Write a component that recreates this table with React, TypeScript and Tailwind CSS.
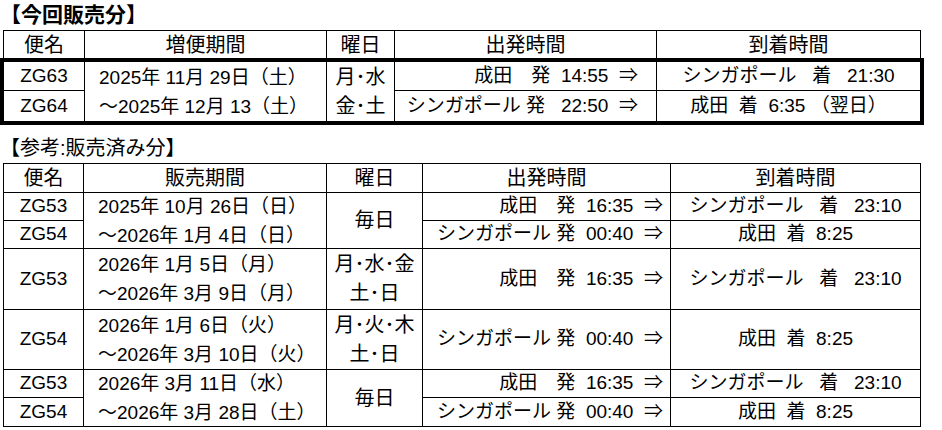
import React from "react";

type CellProps = {
  children?: React.ReactNode;
  className?: string;
};

const Cell = ({ children, className = "" }: CellProps) => (
  <div className={`bg-white flex items-center whitespace-pre ${className}`}>{children}</div>
);

const Center = ({ children, className = "" }: CellProps) => (
  <Cell className={`justify-center ${className}`}>{children}</Cell>
);

const Dates = ({ a, b, className = "" }: { a: string; b: string; className?: string }) => (
  <Cell className={`flex-col !items-start justify-center pl-[14px] leading-[29px] ${className}`}>
    <span>{a}</span>
    <span>{b}</span>
  </Cell>
);

const Days = ({ a, b, className = "" }: { a: string; b?: string; className?: string }) => (
  <Cell className={`flex-col justify-center leading-[29px] text-[20px] ${className}`}>
    <span>{a}</span>
    {b && <span>{b}</span>}
  </Cell>
);

const App = () => {
  return (
    <div className="w-[942px] h-[430px] bg-white text-black text-[19px] font-[family-name:'Liberation_Sans','Noto_Sans_CJK_JP',sans-serif]">
      <div className="h-[30px] text-[21px] font-bold leading-[30px]">【今回販売分】</div>

      <div className="ml-[3px] w-[918px] grid grid-cols-[80px_241px_67px_261px_263px] grid-rows-[27px] gap-px bg-black border-t border-x border-black text-[20px]">
        <Center>便名</Center>
        <Center>増便期間</Center>
        <Center>曜日</Center>
        <Center>出発時間</Center>
        <Center>到着時間</Center>
      </div>
      <div className="w-[924px] grid grid-cols-[80px_241px_67px_261px_263px] grid-rows-[28px_30px] gap-px bg-black border-4 border-black">
        <Center>ZG63</Center>
        <Dates className="row-span-2" a="2025年 11月 29日（土）" b="～2025年 12月 13（土）" />
        <Days className="row-span-2" a="月･水" b="金･土" />
        <Cell className="justify-end pr-[18px]">{"成田　発  14:55  ⇒"}</Cell>
        <Center>{"シンガポール   着   21:30"}</Center>
        <Center>ZG64</Center>
        <Cell className="justify-end pr-[18px]">{"シンガポール 発   22:50  ⇒"}</Cell>
        <Center>{"成田  着  6:35 （翌日）"}</Center>
      </div>

      <div className="h-[38px] pt-[11px] text-[20px] leading-[24px]">【参考:販売済み分】</div>

      <div className="ml-[3px] w-[918px] grid grid-cols-[79px_242px_95px_247px_249px] grid-rows-[28px_27px_27px_60px_59px_27px_28px] gap-px bg-black border border-black">
        <Center className="text-[20px]">便名</Center>
        <Center className="text-[20px]">販売期間</Center>
        <Center className="text-[20px]">曜日</Center>
        <Center className="text-[20px]">出発時間</Center>
        <Center className="text-[20px]">到着時間</Center>

        <Center>ZG53</Center>
        <Dates className="row-span-2" a="2025年 10月 26日（日）" b="～2026年 1月 4日（日）" />
        <Days className="row-span-2" a="毎日" />
        <Cell className="justify-end pr-[7px]">{"成田　発  16:35  ⇒"}</Cell>
        <Center>{"シンガポール   着   23:10"}</Center>
        <Center>ZG54</Center>
        <Cell className="justify-end pr-[7px]">{"シンガポール 発  00:40  ⇒"}</Cell>
        <Center>{"成田  着  8:25"}</Center>

        <Center>ZG53</Center>
        <Dates a="2026年 1月 5日（月）" b="～2026年 3月 9日（月）" />
        <Days a="月･水･金" b="土･日" />
        <Cell className="justify-end pr-[7px]">{"成田　発  16:35  ⇒"}</Cell>
        <Center>{"シンガポール   着   23:10"}</Center>

        <Center>ZG54</Center>
        <Dates a="2026年 1月 6日（火）" b="～2026年 3月 10日（火）" />
        <Days a="月･火･木" b="土･日" />
        <Cell className="justify-end pr-[7px]">{"シンガポール 発  00:40  ⇒"}</Cell>
        <Center>{"成田  着  8:25"}</Center>

        <Center>ZG53</Center>
        <Dates className="row-span-2" a="2026年 3月 11日（水）" b="～2026年 3月 28日（土）" />
        <Days className="row-span-2" a="毎日" />
        <Cell className="justify-end pr-[7px]">{"成田　発  16:35  ⇒"}</Cell>
        <Center>{"シンガポール   着   23:10"}</Center>
        <Center>ZG54</Center>
        <Cell className="justify-end pr-[7px]">{"シンガポール 発  00:40  ⇒"}</Cell>
        <Center>{"成田  着  8:25"}</Center>
      </div>
    </div>
  );
};

export default App;
